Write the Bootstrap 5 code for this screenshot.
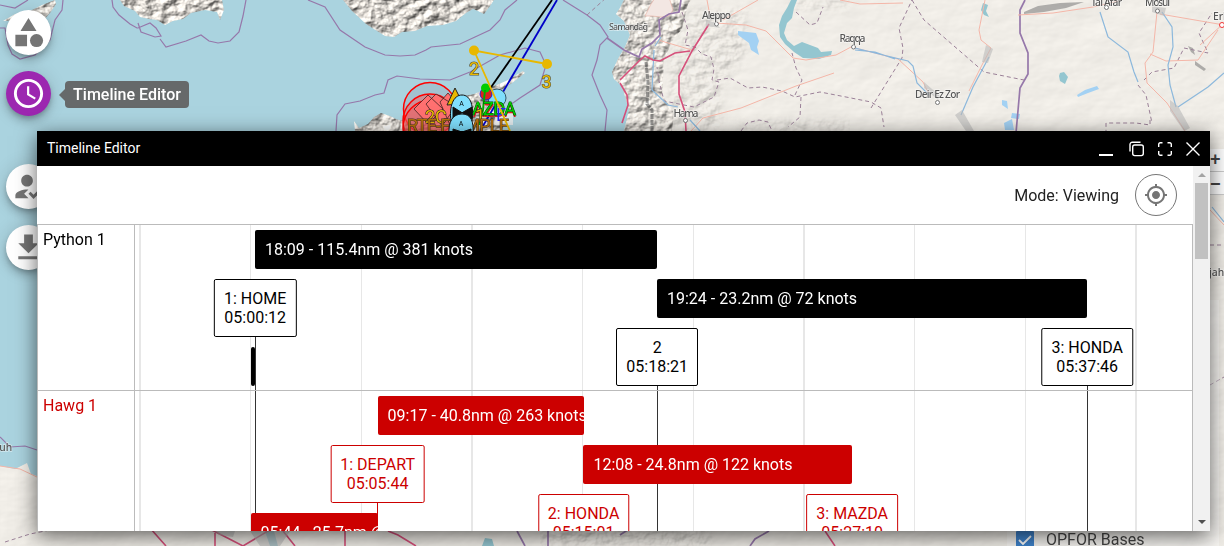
<!DOCTYPE html>
<html lang="en">
<head>
<meta charset="utf-8">
<meta name="viewport" content="width=device-width, initial-scale=1">
<title>Timeline Editor</title>
<link href="https://cdn.jsdelivr.net/npm/bootstrap@5.3.0/dist/css/bootstrap.min.css" rel="stylesheet">
<style>
body{font-family:Roboto,"Liberation Sans",sans-serif;font-size:16px;line-height:19px;color:#000}
.stage{width:1224px;height:546px;background:#aad3df}
.map-canvas{inset:0;width:1224px;height:546px}
.map-canvas .place{font-family:"Noto Sans",sans-serif;font-weight:500;font-size:10.3px;fill:#555;stroke:#fff;stroke-opacity:.5;stroke-width:1.5px;paint-order:stroke}
.fab-column{padding:10px 0 0 6px;gap:16px;width:60px}
.fab{width:45px;height:45px;background:#fff;color:#757575;border:0;box-shadow:0 3px 5px -1px rgba(0,0,0,.2),0 6px 10px rgba(0,0,0,.16),0 1px 18px rgba(0,0,0,.14)}
.fab svg{width:35px;height:35px;fill:currentColor}
.fab.active-fab{background:#9c27b0;color:#fff}
.fab-spaced{margin-top:32px}
.tip{left:65px;top:81px;height:27px;width:124px;background:rgba(97,97,97,.93);color:#fff;font-weight:500;border-radius:4px;line-height:27px}
.tip::before{content:"";position:absolute;left:-6px;top:8px;border:solid transparent;border-width:6px 6px 6px 0;border-right-color:rgba(97,97,97,.93)}
.zoomer{right:0;top:149px;width:18px}
.zoomer span{display:block;height:23px;background:#fff;border-bottom:1px solid #ccc;color:#444;font:bold 18px/21px "Liberation Sans",sans-serif;padding-left:4px}
.zoomer span + span{line-height:24px}
.layer-panel{left:1007px;top:300px;width:212px;height:246px;background:rgba(255,255,255,.4);color:#444;padding:0 0 0 9px}
.layer-panel svg{width:18px;height:18px}
.layer-panel .entry{margin-bottom:-3px;gap:12px}
.editor{left:37px;top:131px;width:1173px;height:400px;background:#fff;box-shadow:0 5px 20px rgba(0,0,0,.62)}
.titlebar{height:35px;background:#000;color:#fff;font-size:14px;padding:0 8px 0 10px}
.titlebar .tools svg{width:18px;height:18px;fill:none;stroke:#fff;stroke-width:1.4}
.titlebar .tools{gap:10px}
.titlebar .tools svg:first-child{margin-right:3px}
.workspace{height:365px}
.toolbar-row{height:58px;padding-right:16px;gap:16px;color:#222}
.mode-btn{width:42px;height:42px;border:1px solid #757575;background:#fff;color:#757575}
.chart{border:1px solid #bbb;border-bottom:0;height:307px}
.names{width:97px;border-right:1px solid #bbb}
.names div{height:166px;padding:5px;border-bottom:1px solid #bbb}
.ink-red{color:#c00}
.tick{top:0;bottom:0;width:1.3px;background:#e7e7e7}
.track{height:166px;border-bottom:1px solid #bbb}
.leg{height:39px;border-radius:2px;background:#000;color:#fff;padding:10px 0 0 10px;white-space:nowrap;overflow:hidden}
.red .leg{background:#c00}
.waypoint{transform:translateX(-50%);background:#fff;border:1px solid #000;border-radius:2px;padding:9px;text-align:center;white-space:nowrap;min-width:82px;height:58px}
.red .waypoint{border-color:#c00;color:#c00}
.stem{width:1.4px;background:#333;bottom:0}
.lane-0{top:5px}.lane-1{top:54px}.lane-2{top:103px}.lane-3{top:122px}
.sbar{width:17px;background:#f1f1f1;padding:7px 2px 7px}
.sbar .thumb{height:76px;background:#c1c1c1;margin-top:6px}
.arrow{width:0;height:0;border:4px solid transparent;margin:0 auto}
.arrow.up{border-top:0;border-bottom-color:#a3a3a3}
.arrow.down{border-bottom:0;border-top-color:#505050}
</style>
</head>
<body>
<div class="stage position-relative overflow-hidden">
<svg class="map-canvas position-absolute" viewBox="0 0 1224 546">
<defs>
<filter id="relief" x="0" y="0" width="100%" height="100%" color-interpolation-filters="sRGB">
<feTurbulence type="fractalNoise" baseFrequency=".085 .11" numOctaves="5" seed="8" result="n"/>
<feDiffuseLighting in="n" surfaceScale="3.300" diffuseConstant="1.14" lighting-color="#f2ede6"><feDistantLight azimuth="225" elevation="52"/></feDiffuseLighting>
<feComposite in2="SourceAlpha" operator="in"/>
</filter>
<filter id="soft" x="0" y="0" width="100%" height="100%" color-interpolation-filters="sRGB">
<feTurbulence type="fractalNoise" baseFrequency=".02 .035" numOctaves="4" seed="3"/>
<feDiffuseLighting surfaceScale=".4" diffuseConstant="1.215" lighting-color="#f1eee8"><feDistantLight azimuth="225" elevation="55"/></feDiffuseLighting>
<feComposite in2="SourceAlpha" operator="in"/>
</filter>
<filter id="fade"><feGaussianBlur stdDeviation="5"/></filter>
</defs>
<g filter="url(#soft)" fill="#f1eee8"><path d="M624 0l-4 8-4 6 8 7 6 14-5 12-7 12-6 13 2 7 8 7 4 14 3 10-5 21v60h602V0z"/><path d="M1150 120h74v426h-74z"/><path d="M0 466l15 3 12-6 4 11 9 3h1184v69H0z"/></g>
<g filter="url(#relief)">
<path d="M120 0l4 6 11 5 5 6 9 2 8 1 8 5 8-4 10-2 8-6 14-3 12 2 3 8 4-10-2-10zM55 0l1 4-6 9-7 8-18-1-22 1 12-7 13-2 14-7zM343 0l9 11 14 13 19 12 9 1 8-5 13-1 12-5 16-1 13-4 10-8 7-4 5 2 6 3 6-8 4-6z"/>
<path d="M354 121l5 7 9-4 6-7 7-4 9 3 6 3 20 6 8-20 30-7 20-4 20-8 12-5 17-10 2 2-13 10-18 12-7 12 20 14-6 10H355z"/>
<path opacity=".8" d="M624 0l-4 8-4 6 8 7 6 14-5 12-7 12-6 13 2 7 8 7 4 14 3 10-5 21h48l2-18-12-18 2-34 8-20 10-12 6-25 10-12 6-12z"/>
</g>
<g filter="url(#relief)" opacity=".25"><path filter="url(#fade)" d="M690 10h55v45l-25 30v46h-50V60zM790 0h60v8h-60zM540 528h170v18H540zM740 122h110v9H740z"/></g>
<path fill="#777" opacity=".55" d="M1024 12l14-6 22-3 24-1-18 6-22 4-20 2zM1188 46l5 2 2 7-4-3zM1195 61l11 8-2 2-9-6z"/>
<path fill="none" stroke="#555" opacity=".6" stroke-width="3" stroke-dasharray="5 1" d="M646 62l2 20-1 22 5 6v21"/>
<path fill="#f3e7e3" stroke="#e9b6aa" stroke-width=".7" d="M645 16l6-12 4-6 14-1 4 13-4 6-8 1-9-1z"/>
<g fill="#94c6d0">
<path d="M791 0h6l-3 8-2 10-5 5-3 10 3 7 7 6 8-4 8 3 8 3 3 4 11-1-1 4-12 4-16-1-9-6-9-8-5-7-1-12 3-9 5-8z"/>
<path d="M983 3l5 2-2 6 3 6-5-2-3-5zM1060 73l4-1 4 5-3 7-5-3-1-5zM265 531h9l4 15h-8zM485 538l7 1 2 7h-12z"/>
</g>
<g fill="#a3d1f3"><path d="M738 31l18 2 3 8-2 6 2 8-8-5-2-7-11-8zM1077 95l8-5 12-4 2 3-11 4-10 4zM1002 100l5 1 1 8-6-4zM1004 123l8-4 2 11h-9zM1012 113l8 1-1 5-8-1z"/></g>
<g fill="none" stroke="#9678aa" stroke-width="1.2">
<path d="M112 0l1 7 6 8 11 9 7 4 1 0 12-5 6 5 5 8-6 1-14-5-3-9M160 39l6 8 20-6 15-6 8 6 9 2 12-2 9-9 4-16 3-16M308 0l17 7 15 23 25 17 20 8 15 1 15-1 11-5 5-3 29-3 15-7 15-7 10-10 5-10 12-10M336 131l1-16 8-11 15-3 15-6 9-2 4-13 9-4 23 3 30 1 20-8 30-17 25-7 15 4 6 13-6 20-20 13-10 7M563 0l24 15 13 10 8 12-8 8-3 15-5 15 8 20 7 15-2 21M0 28h5l3 17 4 9 8 5 15-4 15-15 5-20 7-10 1-10M0 5l15 3 13-8M0 437l10 10 15-1 12 4"/>
<path stroke-width="1.7" d="M681 0l-2 12-10 2-10 6 1 15-8 8-10 6-3 8-15-7-17-12M1025 0l-5 10v23l8 20v21l-8 14-4 45M620 535l12-8M750 546l5-7 14-8M517 531l8 15M548 531v15"/>
</g>
<g fill="none" stroke="#9b8198" stroke-width="1" stroke-dasharray="4 3">
<path d="M587 15l20-18M682 12l6 18-3 15 10 2 7 7 9 3 3 12-2 11 7 2-5 15-20 10-30-6-5-20-2-14M717 80l13-2 18 10 14-1 20 4 13 6 25-5 26 5 25 5 10 6 3 19M795 95l7-15-6-12-4-15M801 97l-1 20-12 10M871 108l31-50 1-10-4-20 13-28M912 0l12 20 60 52 40 8M1144 80l8-8 22-4 10-20 24 5-9-20 13-20M741 131l6-8 12-3 9 2 4 9M1150 120v5l-14-2h-30v8M1138 85l8 10 6 28M796 12l14 13 7-2 6-16M1210 245h14M1210 385l14-8M5 542l25-8 30-6 25-2"/>
</g>
<g fill="none" stroke="#f4b6a8" stroke-width="1">
<path d="M716 23l30 2 20 6 12 12 15 15 13 2 30-5 15-8 20 5 27 7 25 23 5 10M723 20l35-20M658 40l34 10M834 73l-38 13-55 22-38 10-12 13M840 0l20 4 43-1M707 0l3 16M985 0l-6 30 2 10 10 8-8 15-14 28M1018 15l35-2 40-6 25-6M1157 12l-4 40-8 11 2 20 20 20 18 28M1160 14l35 6 29 5M1200 45l24-22M1150 54l16 7 32-1 20-30M1210 210l14 15M0 466l20 3 17 8"/>
</g>
<g fill="none" stroke="#8cb8dc" stroke-width="1.2"><path d="M654 50l-2 40 16 15 10 2M655 46l6-9M855 48l28 7 25 6 5 5 4 17 12 12M855 50l20 2 20 7M1100 12l8 25 20 15 6 20 4 10M1162 12l10 15 1 20-5 18 2 20 6 22M1178 107l30-20 16-14M961 115l12-28 16-30M1212 207l12 15M690 120l10 11"/></g>
<g fill="none" stroke="#d6507b" stroke-width="1.6"><path d="M709 24l-17 27-13 25v18l6 18 1 19M690 51l-15 2-15 8-7-1-8-4-5 4M620 83l7 12 1 10-6 18M640 60l-20 20M150 528l16 18M210 529l33 17M243 546l30-18M283 531l12 15M345 531v15M825 531l10 15M215 531v15M388 531l10 4 18 11"/></g>
<path fill="#bbb" opacity=".6" d="M706 20l10 3 4 5-14-2zM1152 6l14 2-2 8-12-4zM955 115l7-5 12 21h-8zM924 82l16 14-2 4-14-12zM986 45l7 4-5 14-6-1zM1170 100l8 6 12 22-6 3-14-20zM250 531h40l-10 15h-20zM215 531h20l-2 6-14-2z"/>
<g fill="#fff" stroke="#777"><circle cx="716.500" cy="24" r="2"/><circle cx="853.500" cy="47" r="2"/><circle cx="685.500" cy="120.500" r="2"/><circle cx="937.500" cy="102.500" r="2"/><circle cx="1106.500" cy="7.500" r="2"/><circle cx="1157.500" cy="11" r="2"/><circle cx="1222" cy="25" r="2.500" stroke="#e33"/></g>
<g class="place">
<text x="702" y="19" textLength="29">Aleppo</text><text x="839.500" y="42" textLength="26">Raqqa</text><text x="673.500" y="116.500" textLength="25">Hama</text><text x="915" y="98" textLength="45">Deir Ez Zor</text><text x="609" y="30" textLength="39" font-size="9">Samandağ</text><text x="1091" y="5.500" textLength="31">Tal Afar</text><text x="1145" y="6" textLength="25">Mosul</text><text x="1213" y="20">Erbil</text><text x="-5" y="451">ruh</text><text x="1209" y="276">jah.</text>
</g>
<!-- routes and unit markers -->
<path d="M552 0L487 93" stroke="#000" stroke-width="1.8"/>
<path d="M557 0L480 131" stroke="#0000c8" stroke-width="1.8"/>
<g fill="rgba(255,80,80,.45)" stroke="#f00" stroke-width="1.500"><circle cx="430" cy="109" r="26.500" fill="rgba(130,130,150,.2)"/><circle cx="430" cy="121" r="27"/><circle cx="431" cy="128" r="28"/></g>
<g fill="#ff7070" stroke="#422" stroke-width=".8"><path d="M414 109l14-14 15 14-15 15zM426 104l10-10 20 12-14 20zM440 102l8-9 12 14-10 18z"/></g>
<circle cx="497" cy="98" r="9" fill="#80dffd" stroke="#356"/>
<circle cx="486" cy="94" r="6" fill="#d22" stroke="#22c"/>
<circle cx="485.500" cy="88" r="4.500" fill="#0c0"/>
<path d="M485 90l-2 20-4 15" fill="none" stroke="#0a0" stroke-width="2"/>
<path d="M495 112h18v13h-18z" fill="#eee" opacity=".8"/>
<g font-family="Roboto,sans-serif" font-size="18" paint-order="stroke">
<text x="473" y="117" fill="#e02020" textLength="43">AZDA</text><text x="472" y="115" fill="#0c0" stroke="#040" stroke-width="1" textLength="44">AZDA</text>
<text x="425" y="123" fill="#e8b800" stroke="#222">2C</text><text x="475" y="122" fill="#e8b800" stroke="#222">1</text>
<text x="496" y="121" fill="#22f">E</text>
<text x="407" y="132" fill="#b8720a" stroke="#432" stroke-width="1" textLength="102">RTE-F AMPLE</text>
</g>
<path d="M510 131L474 50.500 547 64" fill="none" stroke="#e8b800" stroke-width="1.800"/>
<g fill="#e8b800"><circle cx="474" cy="50.500" r="5"/><circle cx="547" cy="64" r="5"/></g>
<g font-family="Roboto,sans-serif" font-size="18" fill="#e8b800" stroke="#554" stroke-width="1.200" paint-order="stroke"><text x="469" y="75">2</text><text x="541.500" y="88">3</text></g>
<path d="M455 88l-8 17 16-1z" fill="#e8b800" stroke="#222"/>
<g fill="#80dffd" stroke="#111"><path d="M451 121c-2-14 2-26 11-26s12 12 10 26z"/><path d="M453 107l19 12v-12l-19 11z" fill="#111"/><path d="M449 135c-1-14 4-21 13-21s12 7 11 21z"/><path d="M453 129l18 6v-6l-18 6z" fill="#111"/></g>
<g font-family="Roboto,sans-serif" font-size="7" text-anchor="middle"><text x="461.500" y="106">A</text><text x="461" y="126">A</text></g>
</svg>

<nav class="fab-column d-flex flex-column position-relative">
<button class="fab rounded-circle d-flex align-items-center justify-content-center p-0"><svg viewBox="0 0 24 24"><path d="M12 2l-5.500 9h11zM3 13.500h8v8H3z"/><circle cx="17.500" cy="17.500" r="4.500"/></svg></button>
<button class="fab active-fab rounded-circle d-flex align-items-center justify-content-center p-0"><svg viewBox="0 0 24 24"><path d="M11.990 2C6.470 2 2 6.480 2 12s4.470 10 9.990 10C17.520 22 22 17.520 22 12S17.520 2 11.990 2zM12 20c-4.420 0-8-3.580-8-8s3.580-8 8-8 8 3.580 8 8-3.580 8-8 8zM12.500 7H11v6l5.250 3.150.75-1.230-4.500-2.670z"/></svg></button>
<button class="fab fab-spaced rounded-circle d-flex align-items-center justify-content-center p-0"><svg viewBox="0 0 24 24"><path d="M9 17l3-2.940c-.39-.04-.68-.06-1-.06-2.670 0-8 1.340-8 4v2h9l-3-3zM11 12c2.210 0 4-1.790 4-4s-1.790-4-4-4-4 1.790-4 4 1.790 4 4 4M15.470 20.500L12 17l1.400-1.410 2.070 2.080 5.130-5.170 1.400 1.410z"/></svg></button>
<button class="fab rounded-circle d-flex align-items-center justify-content-center p-0"><svg viewBox="0 0 24 24"><path d="M19 9h-4V3H9v6H5l7 7 7-7zM5 18v2h14v-2H5z"/></svg></button>
</nav>
<div class="tip position-absolute text-center">Timeline Editor</div>

<div class="zoomer position-absolute"><span>+</span><span>−</span></div>
<div class="layer-panel position-absolute d-flex align-items-end">
<div class="entry d-flex align-items-center"><svg viewBox="0 0 18 18"><rect width="18" height="18" rx="1" fill="#3f83cc"/><path d="M3 9l4 4 8-8" fill="none" stroke="#fff" stroke-width="1.800"/></svg><span class="text-nowrap">OPFOR Bases</span></div>
</div>

<section class="editor position-absolute overflow-visible">
<header class="titlebar d-flex align-items-center justify-content-between"><span>Timeline Editor</span>
<div class="tools d-flex align-items-center">
<svg viewBox="0 0 18 18"><path d="M2 15h14" stroke-width="2"/></svg>
<svg viewBox="0 0 18 18"><rect x="4.700" y="5" width="10.600" height="10.600" rx="2"/><path d="M2 11.500V4.500a2.300 2.300 0 0 1 2.300-2.300H12.500"/></svg>
<svg viewBox="0 0 18 18"><path d="M2.700 7V4.200a1.500 1.500 0 0 1 1.500-1.500H6.500M11.500 2.700h2.300a1.500 1.500 0 0 1 1.500 1.500V7M15.300 11v2.800a1.500 1.500 0 0 1-1.500 1.500H11.500M6.500 15.300H4.200a1.500 1.500 0 0 1-1.500-1.500V11"/></svg>
<svg viewBox="0 0 18 18"><path d="M2.500 2.500l13 13M15.500 2.500l-13 13"/></svg>
</div></header>
<div class="workspace d-flex">
<div class="flex-grow-1 overflow-hidden">
<div class="toolbar-row d-flex align-items-center justify-content-end"><span>Mode: Viewing</span><button class="mode-btn rounded-circle p-0 d-flex align-items-center justify-content-center"><svg width="24" height="24" viewBox="0 0 24 24" fill="currentColor"><path d="M12 8c-2.210 0-4 1.790-4 4s1.790 4 4 4 4-1.790 4-4-1.790-4-4-4zm8.940 3c-.46-4.170-3.770-7.480-7.940-7.940V1h-2v2.060C6.830 3.520 3.520 6.830 3.060 11H1v2h2.060c.46 4.170 3.770 7.480 7.940 7.940V23h2v-2.060c4.170-.46 7.480-3.770 7.940-7.940H23v-2h-2.060zM12 19c-3.870 0-7-3.130-7-7s3.130-7 7-7 7 3.130 7 7-3.130 7-7 7z"/></svg></button></div>
<div class="chart d-flex overflow-hidden">
<div class="names flex-shrink-0"><div>Python 1</div><div class="ink-red">Hawg 1</div></div>
<div class="lanes flex-grow-1 position-relative overflow-hidden" id="lanes"></div>
</div>
</div>
<div class="sbar d-flex flex-column flex-shrink-0"><div class="arrow up"></div><div class="thumb"></div><div class="arrow down mt-auto"></div></div>
</div>
</section>
</div>
<script src="https://cdn.jsdelivr.net/npm/bootstrap@5.3.0/dist/js/bootstrap.bundle.min.js"></script>
<script>
const lanes = document.getElementById('lanes');
const add = (parent, cls, style, html = '') => {
  const el = document.createElement('div');
  el.className = cls;
  el.style.cssText = style;
  el.innerHTML = html;
  parent.appendChild(el);
  return el;
};
for (let i = 0; i < 10; i++) add(lanes, 'tick position-absolute', `left:${4.4 + i * 110.65}px`);
// stems run from the waypoint to the bottom of the chart
[[120, 60], [522, 110], [952, 110]].forEach(([x, y]) => add(lanes, 'stem position-absolute', `left:${x - .4}px;top:${y}px`));
const tracks = [
  {cls: '', legs: [[120, 402, 0, '18:09 - 115.4nm @ 381 knots'], [522, 430, 1, '19:24 - 23.2nm @ 72 knots'], [115.6, 4.4, 3, '']],
   points: [[120.2, 1, '1: HOME', '05:00:12'], [522.2, 2, '2', '05:18:21'], [952.2, 2, '3: HONDA', '05:37:46']]},
  {cls: 'red', legs: [[242.6, 206, 0, '09:17 - 40.8nm @ 263 knots'], [448.4, 269, 1, '12:08 - 24.8nm @ 122 knots'], [115.6, 127.400, 3, '05:44 - 25.7nm @ 269 knots']],
   points: [[242.6, 1, '1: DEPART', '05:05:44'], [448.6, 2, '2: HONDA', '05:15:01'], [717.2, 2, '3: MAZDA', '05:27:10']]}
];
tracks.forEach(t => {
  const row = add(lanes, 'track position-relative ' + t.cls, '');
  if (t.cls) add(row, 'stem position-absolute', 'left:242.2px;width:1px;top:110px;background:#c00');
  t.legs.forEach(([x, w, l, s]) => add(row, `leg position-absolute lane-${l}`, `left:${x}px;width:${w}px` + (s ? '' : ';padding:0'), s));
  t.points.forEach(([x, l, a, b]) => add(row, `waypoint position-absolute lane-${l}`, `left:${x}px`, a + '<br>' + b));
});
</script>
</body>
</html>
